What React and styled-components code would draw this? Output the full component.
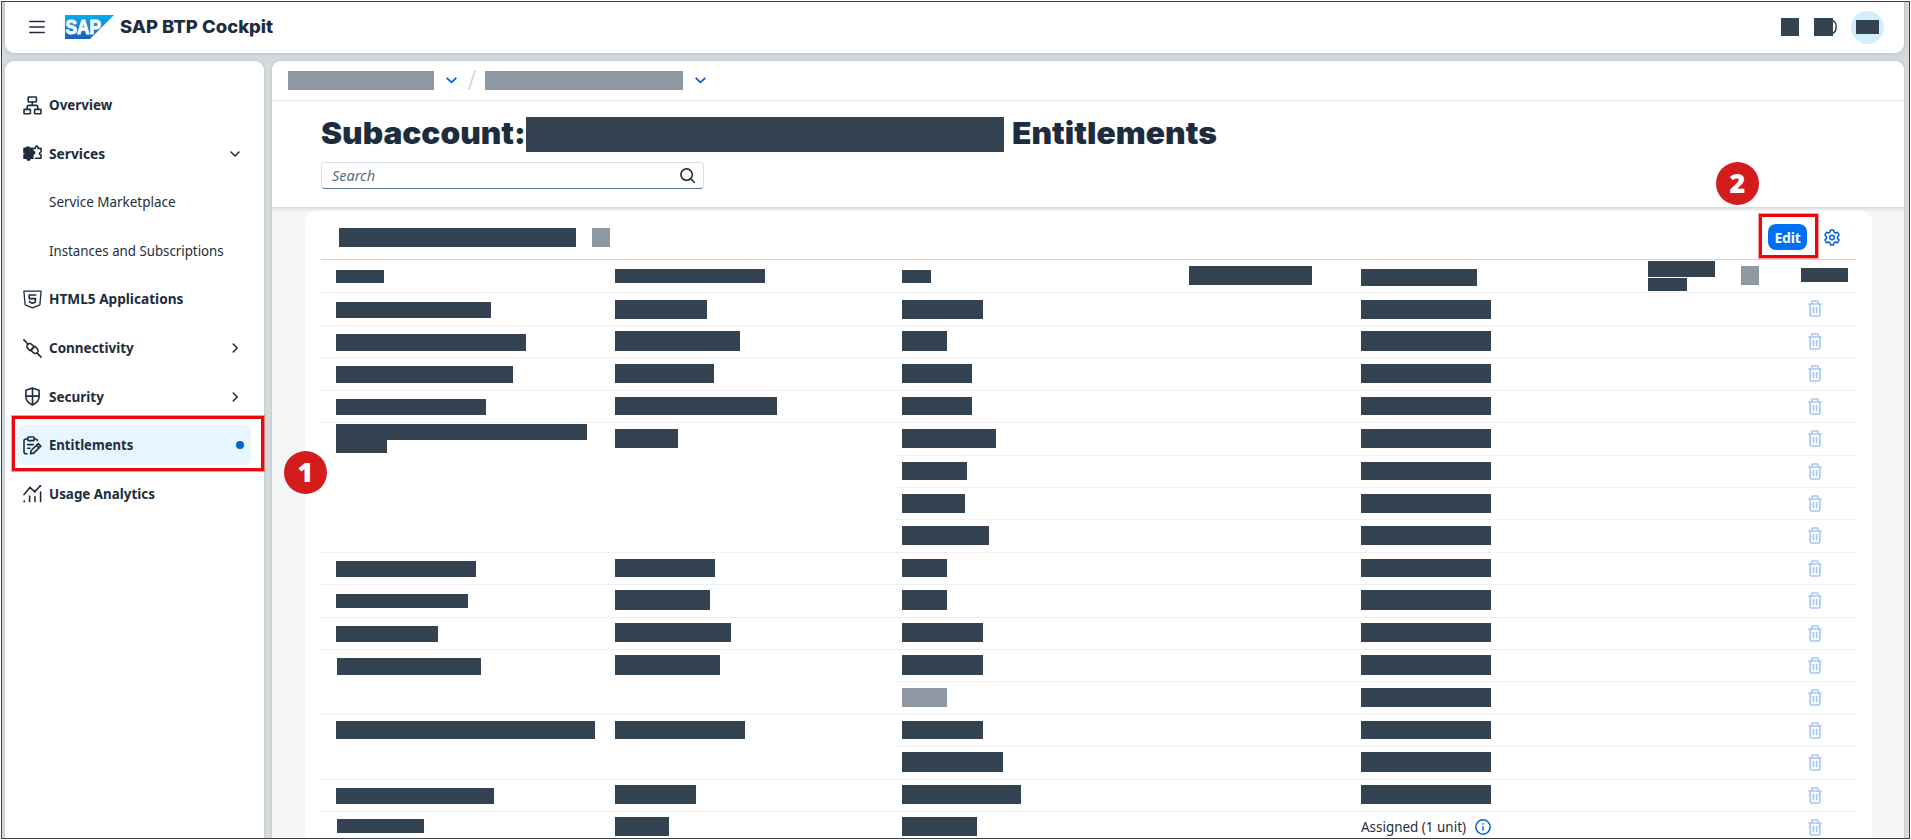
import React from "react";
import styled, { createGlobalStyle, css } from "styled-components";

const ink = "#1d2d3e";
const slate = "#344351";
const ash = "#8f99a3";

const GlobalStyle = createGlobalStyle`
  * { box-sizing: border-box; }
  html, body { margin: 0; padding: 0; background: #fff; }
  body { font-family: "Noto Sans", "Open Sans", sans-serif; color: ${ink}; overflow: hidden; }
`;

const Frame = styled.div`
  position: relative;
  width: 1909px;
  height: 838px;
  margin: 1px;
  border: 1px solid #3c3f42;
  background: #d5dadd;
  overflow: hidden;
  padding: 0 5px 0 3px;
  display: flex;
  flex-direction: column;
  gap: 8px;
`;

const Shell = styled.header`
  height: 51px;
  flex: none;
  background: #fff;
  border-radius: 0 0 9px 9px;
  box-shadow: 0 0 4px rgba(60, 75, 90, 0.25);
  display: flex;
  align-items: center;
  padding: 0 20px 1px 24px;
`;

const MenuIcon = styled.svg`
  width: 16px;
  height: 14px;
  margin-right: 20px;
`;

const Logo = styled.svg`
  width: 49px;
  height: 24px;
  margin-right: 6px;
`;

const Product = styled.div`
  font-family: Inter, "Noto Sans", sans-serif;
  font-size: 17.5px;
  font-weight: 800;
  white-space: nowrap;
  flex: 1;
  line-height: 24px;
  padding-bottom: 1px;
`;

const ShellTools = styled.div`
  display: flex;
  align-items: center;
  gap: 15px;
`;

const Avatar = styled.div`
  width: 33px;
  height: 33px;
  border-radius: 50%;
  background: #d1efff;
  display: flex;
  align-items: center;
  justify-content: center;
  margin-left: -1px;
`;

const HiddenAction = styled.div`
  display: flex;
  align-items: center;
  svg { width: 4px; height: 16px; }
`;

const Body = styled.div`
  flex: 1;
  min-height: 0;
  display: flex;
  gap: 8px;
`;

const Side = styled.nav`
  width: 259px;
  flex: none;
  background: #fff;
  border-radius: 9px 9px 0 0;
  box-shadow: 0 0 3px rgba(60, 75, 90, 0.2);
  padding: 24.3px 13px 0 12px;
`;

const NavItem = styled.div`
  height: 40px;
  margin-bottom: 8.55px;
  border-radius: 6px;
  padding: 0 7px 0 ${(p) => (p.$sub ? 32 : 6)}px;
  display: flex;
  align-items: center;
  font-size: 14px;
  line-height: 20px;
  font-weight: ${(p) => (p.$sub ? 400 : 700)};
  background: ${(p) => (p.$active ? "#e8f7ff" : "transparent")};
`;

const NavIcon = styled.svg`
  width: 19px;
  height: 19px;
  margin-right: 7px;
  flex: none;
  fill: none;
  stroke: ${ink};
  stroke-width: 1.6;
  stroke-linecap: round;
  stroke-linejoin: round;
`;

const NavLabel = styled.span`
  flex: 1;
  white-space: nowrap;
`;

const Label = styled.span`
  display: inline-block;
  transform-origin: 0 50%;
  transform: scaleX(${(p) => p.$fit});
`;

const NavArrow = styled.svg`
  width: 10px;
  height: 10px;
  margin-right: 4px;
  fill: none;
  stroke: ${ink};
  stroke-width: 1.5;
  stroke-linecap: round;
  stroke-linejoin: round;
`;

const Dot = styled.i`
  width: 8px;
  height: 8px;
  border-radius: 50%;
  background: #0064d9;
`;

const Main = styled.main`
  flex: 1;
  min-width: 0;
  background: #f5f6f8;
  border-radius: 9px 9px 0 0;
  box-shadow: 0 0 3px rgba(60, 75, 90, 0.2);
  overflow: hidden;
  display: flex;
  flex-direction: column;
`;

const Crumbs = styled.div`
  height: 40px;
  flex: none;
  background: #fff;
  border-bottom: 1px solid #f2f3f4;
  display: flex;
  align-items: center;
  padding: 0 16px 1px;
`;

const BlueArrow = styled.svg`
  width: 11px;
  height: 7px;
  margin: 0 11px 0 12px;
  fill: none;
  stroke: #0064d9;
  stroke-width: 1.8;
  stroke-linecap: round;
  stroke-linejoin: round;
`;

const Slash = styled.svg`
  width: 8px;
  height: 20px;
  margin-right: 9px;
  stroke: #d2d4d6;
  stroke-width: 1.6;
`;

const PageHead = styled.div`
  height: 107px;
  flex: none;
  background: #fff;
  border-bottom: 1px solid #d9dbdd;
  box-shadow: 0 1px 4px rgba(80, 90, 100, 0.18);
  padding: 16px 49px 0;
  position: relative;
  z-index: 1;
`;

const Title = styled.h1`
  margin: 0;
  height: 35px;
  display: flex;
  align-items: center;
  font-family: Inter, "Noto Sans", sans-serif;
  font-size: 30.5px;
  line-height: 32px;
  font-weight: 900;
  white-space: nowrap;
`;

const TitleText = styled.span`
  width: ${(p) => p.$w}px;
  padding-left: ${(p) => p.$pad || 0}px;
  padding-bottom: 4px;
  flex: none;
`;

const Search = styled.div`
  width: 383px;
  height: 27px;
  margin-top: 10px;
  border: 1px solid #d9dee3;
  border-bottom-color: #5b738b;
  border-radius: 4px;
  display: flex;
  align-items: center;
  justify-content: space-between;
  padding: 0 8px 1px 10px;
  font-size: 14px;
  font-style: italic;
  color: #556b82;
  svg { width: 15px; height: 15px; fill: none; stroke: ${ink}; stroke-width: 1.6; stroke-linecap: round; }
`;

const Panel = styled.section`
  flex: 1;
  min-height: 0;
  margin: 2px 32px 0 33px;
  background: #fff;
  border-radius: 12px 12px 0 0;
  padding: 0 16px;
  overflow: hidden;
`;

const Toolbar = styled.div`
  height: 50px;
  border-bottom: 1px solid #cfd5d9;
  display: flex;
  align-items: center;
  padding: 5px 16px 0 18px;
`;

const EditButton = styled.button`
  width: 39px;
  height: 26px;
  margin: 0 17px 0 auto;
  border: 0;
  border-radius: 8px;
  background: #0070f2;
  color: #fff;
  font: 700 14px/25px "Noto Sans", sans-serif;
  padding: 0;
  text-align: center;
  letter-spacing: -0.2px;
`;

const Gear = styled.svg`
  width: 16px;
  height: 17px;
  fill: none;
  stroke: #0064d9;
  stroke-width: 1.5;
  stroke-linejoin: round;
`;

const columns = "294px 281px 287px 172px 287px 93px 60px 61px";

const HeaderRow = styled.div`
  display: grid;
  grid-template-columns: ${columns};
  height: 32.4px;
  overflow: hidden;
`;

const Row = styled.div`
  display: grid;
  grid-template-columns: 294px 280px 1fr;
  height: 32.43px;
`;

const line = css`border-top: 1px solid #eef0f1;`;

const Cell = styled.div`
  padding-left: ${(p) => p.$pad ?? 0}px;
  ${(p) => p.$line && line}
`;

const Details = styled.div`
  ${line}
  display: grid;
  grid-template-columns: 466px 447px 48px;
`;

const Bar = styled.div`
  width: ${(p) => p.$w}px;
  height: ${(p) => p.$h}px;
  margin-top: ${(p) => p.$t || 0}px;
  margin-left: ${(p) => p.$x || 0}px;
  background: ${(p) => (p.$soft ? ash : slate)};
  flex: none;
`;

const Assigned = styled.div`
  display: flex;
  align-items: center;
  height: 29px;
  font-size: 14px;
  white-space: nowrap;
  span { width: 113.5px; }
  svg { width: 16px; height: 16px; fill: none; stroke: #0064d9; stroke-width: 1.5; }
`;

const Bin = styled.svg`
  display: block;
  width: 14px;
  height: 17px;
  margin-top: 7px;
  fill: none;
  stroke: #a8c6f3;
  stroke-width: 1.7;
  stroke-linecap: round;
  stroke-linejoin: round;
`;

const Highlight = styled.div`
  position: absolute;
  left: ${(p) => p.$x}px;
  top: ${(p) => p.$y}px;
  width: ${(p) => p.$w}px;
  height: ${(p) => p.$h}px;
  border: 3.5px solid #ea0a0d;
  outline: 0.5px solid rgba(234, 10, 13, 0.4);
  z-index: 3;
`;

const Step = styled.div`
  position: absolute;
  left: ${(p) => p.$x}px;
  top: ${(p) => p.$y}px;
  width: 43px;
  height: 43px;
  border-radius: 50%;
  background: #d41c1c;
  color: #fff;
  font: 800 27px/42px "Open Sans", "Noto Sans", sans-serif;
  text-align: center;
  z-index: 3;
`;

const icons = {
  overview: (
    <>
      <rect x="5.2" y="1" width="8.2" height="5" rx="0.6" />
      <rect x="1" y="13.4" width="6.4" height="4.4" rx="0.6" />
      <rect x="11.6" y="13.4" width="6.4" height="4.4" rx="0.6" />
      <path d="M9.3 6v3.4M4.2 13.4V11q0-1.6 1.6-1.6h7.4q1.6 0 1.6 1.6v2.4" />
    </>
  ),
  services: (
    <>
      <path fill={ink} d="M1 4.4h2.6c-.6-1.9 3-1.9 2.6 0h3.6v3c2.3-.6 2.3 3.2 0 2.6v4.2H7c.5 2.6-3.2 2.6-2.8 0H1v-3.4c1.7.3 1.7-2.6 0-2.3z" />
      <path d="M11 4.4h1.3c-.3-3 3-3 2.7 0h3V8c-2 .2-2 2.6 0 2.8v3.4h-5.600" />
    </>
  ),
  html5: (
    <>
      <path strokeWidth="1.3" d="M.9 1.2h17.2l-1.2 13.6-7.4 3-7.4-3z" />
      <path d="M12.8 5H6.2v3.6h6.3l-.3 3.6-2.7 1-2.7-1-.2-1" />
    </>
  ),
  connectivity: (
    <>
      <path d="M.9.9l4.3 4.3M13.9 13.9l4.2 4.2" />
      <path d="M10.9 7.6C9 5.2 6.4 3.4 4.6 5.2s-.2 4.400 2.500 6.500zM8.100 11.400c1.900 2.400 4.500 4.200 6.300 2.400s.2-4.400-2.500-6.500z" />
    </>
  ),
  security: (
    <path d="M9.5 1l6.6 2.3v6.2c0 4-2.6 6.7-6.6 8.500-4-1.800-6.600-4.500-6.600-8.500V3.300zM9.500 1v17M2.900 9.100h13.200" />
  ),
  entitlements: (
    <>
      <path d="M4.700 3H3Q1 3 1 5v10.800q0 2 2 2h1M11.300 3h1.200q1.600 0 1.900 1.500" />
      <rect x="4.7" y="1" width="6.6" height="3.6" rx="1.2" />
      <path d="M4.600 8.600h5.600M4.600 12.200h2.300M7.500 17.800l.6-3.300 7.200-6.900 2.500 2.500-7.100 7zM13.600 9.400l2.400 2.400" />
    </>
  ),
  usage: (
    <>
      <path d="M1 10.600l6-7 4.800 4 5.600-5.800M1.200 17v.8M6.600 12v5.600M12 12.800v4.800M17.600 8v9.600" />
      <path strokeWidth="2.2" d="M7 3.600v.1M17.200 2v.1M11.800 7.600v.1" />
    </>
  ),
};

const nav = [
  { label: "Overview", icon: "overview", fit: 0.96 },
  { label: "Services", icon: "services", arrow: "down", fit: 0.985 },
  { label: "Service Marketplace", sub: true, fit: 0.96 },
  { label: "Instances and Subscriptions", sub: true, fit: 0.948 },
  { label: "HTML5 Applications", icon: "html5", fit: 0.974 },
  { label: "Connectivity", icon: "connectivity", arrow: "right", fit: 0.963 },
  { label: "Security", icon: "security", arrow: "right", fit: 0.965 },
  { label: "Entitlements", icon: "entitlements", active: true, fit: 0.937 },
  { label: "Usage Analytics", icon: "usage", fit: 0.957 },
];

// a: blocks of the first column [width, height, top, x]; b, c: widths of the second and third; t, h: top and height
const rows = [
  { a: [[154.5, 16, 9]], b: 91.5, c: 81, t: 7, h: 18.5 },
  { a: [[189.5, 17, 8.2]], b: 125, c: 45, t: 5.6, h: 19.5 },
  { a: [[177, 17, 8.2]], b: 99.4, c: 70, t: 6, h: 19 },
  { a: [[150, 16, 8.5]], b: 162, c: 70, t: 6, h: 18.5 },
  { a: [[251, 15.5, 1], [51, 13, 0.5]], b: 63, c: 94.4, t: 6, h: 18.5 },
  { c: 65.4, t: 6.3, h: 18.5 },
  { c: 63, t: 5.8, h: 19 },
  { c: 87, t: 5.5, h: 19.5 },
  { a: [[140, 16, 8.3]], b: 100.4, c: 45, t: 6, h: 18.5 },
  { a: [[132, 14, 8.8]], b: 95, c: 45, t: 5.3, h: 19.5 },
  { a: [[102.4, 16, 8.5]], b: 116, c: 81, t: 5.3, h: 19 },
  { a: [[144, 17, 7.7, 1]], b: 105, c: 81, t: 5.0, h: 19.5 },
  { soft: true, c: 45, t: 5.7, h: 19 },
  { a: [[259, 18.5, 5.8]], b: 129.5, c: 81, t: 5.8, h: 18.5 },
  { c: 101, t: 5, h: 19.5 },
  { a: [[158, 16, 8.3]], b: 81.4, c: 119.4, t: 5.3, h: 19 },
  { a: [[87, 14, 7.3, 1]], b: 54, c: 75.4, t: 5, h: 18.5, last: true },
];

function Arrow({ dir }) {
  return (
    <NavArrow viewBox="0 0 10 10">
      <path d={dir === "down" ? "M1 3l4 4 4-4" : "M3.2 1l4 4-4 4"} />
    </NavArrow>
  );
}

function Chevron() {
  return (
    <BlueArrow viewBox="0 0 11 7">
      <path d="M1.2 1.3l4.3 4 4.3-4" />
    </BlueArrow>
  );
}

function TrashIcon() {
  return (
    <Bin viewBox="0 0 14 17">
      <path d="M1 4h12M4 3.800V1.800q0-.8.8-.8h4.400q.8 0 .8.8v2M2.200 4v10.800q0 1.200 1.200 1.200h7.200q1.200 0 1.200-1.200V4M5.400 7.600v5M8.600 7.600v5" />
    </Bin>
  );
}

function EntitlementRow({ r }) {
  return (
    <Row>
      <Cell $line={r.a} $pad={15}>
        {r.a?.map(([w, h, t, x], i) => <Bar key={i} $w={w} $h={h} $t={t} $x={x} />)}
      </Cell>
      <Cell $line={r.b}>{r.b && <Bar $w={r.b} $h={r.h} $t={r.t} />}</Cell>
      <Details>
        <Cell $pad={7}><Bar $w={r.c} $h={r.h} $t={r.t} $soft={r.soft} /></Cell>
        <Cell>
          {r.last ? (
            <Assigned>
              <span><Label $fit={0.96}>Assigned (1 unit)</Label></span>
              <svg viewBox="0 0 16 16"><circle cx="8" cy="8" r="7.2" /><path d="M8 7.2v4.3M8 4.3v1.3" /></svg>
            </Assigned>
          ) : <Bar $w={130.4} $h={r.h} $t={r.t} />}
        </Cell>
        <Cell><TrashIcon /></Cell>
      </Details>
    </Row>
  );
}

export default function App() {
  return (
    <>
      <GlobalStyle />
      <Frame>
        <Shell>
          <MenuIcon viewBox="0 0 16 14" stroke={ink} strokeWidth="1.5" strokeLinecap="round">
            <path d="M.8 1.5h14.4M.8 7h14.4M.8 12.5h14.4" />
          </MenuIcon>
          <Logo viewBox="0 0 49 24">
            <defs>
              <linearGradient id="sap" x1="0" y1="0" x2="0" y2="1">
                <stop offset="0" stopColor="#00aeef" />
                <stop offset="1" stopColor="#1d5fbf" />
              </linearGradient>
            </defs>
            <path d="M0 0h49L25 24H0z" fill="url(#sap)" />
            <text x="0.5" y="19" fontFamily="Liberation Sans, sans-serif" fontWeight="700" fontSize="19.5" fill="#fff" stroke="#fff" strokeWidth="1" textLength="35.5" lengthAdjust="spacingAndGlyphs">SAP</text>
          </Logo>
          <Product><Label $fit={1.056}>SAP BTP Cockpit</Label></Product>
          <ShellTools>
            <Bar $w={18.5} $h={18} />
            <HiddenAction>
              <Bar $w={19} $h={18} />
              <svg viewBox="0 0 4 16" fill="none" stroke={ink} strokeWidth="1.3"><path d="M0 1.5q3.2 2 3.2 6.5T0 14.5" /></svg>
            </HiddenAction>
            <Avatar><Bar $w={23} $h={14} /></Avatar>
          </ShellTools>
        </Shell>
        <Body>
          <Side>
            {nav.map((n) => (
              <NavItem key={n.label} $sub={n.sub} $active={n.active}>
                {n.icon && <NavIcon viewBox="0 0 19 19">{icons[n.icon]}</NavIcon>}
                <NavLabel><Label $fit={n.fit}>{n.label}</Label></NavLabel>
                {n.arrow && <Arrow dir={n.arrow} />}
                {n.active && <Dot />}
              </NavItem>
            ))}
          </Side>
          <Main>
            <Crumbs>
              <Bar $w={146} $h={19} $soft />
              <Chevron />
              <Slash viewBox="0 0 8 20"><path d="M7 .5L1 19.5" /></Slash>
              <Bar $w={198} $h={19} $soft />
              <Chevron />
            </Crumbs>
            <PageHead>
              <Title>
                <TitleText $w={205}><Label $fit={1.038}>Subaccount:</Label></TitleText>
                <Bar $w={478} $h={35} />
                <TitleText $w={220} $pad={8}><Label $fit={1.042}>Entitlements</Label></TitleText>
              </Title>
              <Search>
                <Label $fit={1.03}>Search</Label>
                <svg viewBox="0 0 15 15"><circle cx="6.6" cy="6.6" r="5.7" /><path d="M10.8 10.8l3.4 3.4" /></svg>
              </Search>
            </PageHead>
            <Panel>
              <Toolbar>
                <Bar $w={237} $h={19} />
                <Bar $w={18} $h={19} $x={16} $soft />
                <EditButton>Edit</EditButton>
                <Gear viewBox="0 0 16 17">
                  <path d="M6.5 1h3l.6 2.2 1.3.8 2.2-.7 1.5 2.7-1.6 1.6v1.8l1.6 1.6-1.5 2.7-2.2-.7-1.3.8L9.500 16h-3l-.6-2.200-1.300-.8-2.200.7L.9 11l1.600-1.600V7.600L.9 6l1.500-2.700 2.200.7 1.300-.8z" />
                  <circle cx="8" cy="8.5" r="2.3" />
                </Gear>
              </Toolbar>
              <HeaderRow>
                <Cell $pad={15}><Bar $w={48} $h={13} $t={9.5} /></Cell>
                <Cell><Bar $w={150} $h={14} $t={8.5} /></Cell>
                <Cell $pad={6}><Bar $w={29} $h={12.5} $t={10} /></Cell>
                <Cell $pad={6}><Bar $w={123} $h={18.5} $t={6} /></Cell>
                <Cell $pad={6}><Bar $w={116} $h={17} $t={8.5} /></Cell>
                <Cell $pad={6}><Bar $w={67.4} $h={15.5} $t={1} /><Bar $w={39} $h={13} $t={1} /></Cell>
                <Cell $pad={6}><Bar $w={18} $h={18.5} $t={6} $soft /></Cell>
                <Cell $pad={6}><Bar $w={47} $h={14} $t={8} /></Cell>
              </HeaderRow>
              {rows.map((r, i) => <EntitlementRow key={i} r={r} />)}
            </Panel>
          </Main>
        </Body>
        <Highlight $x={10} $y={414} $w={252} $h={55} />
        <Highlight $x={1757} $y={211.5} $w={59} $h={44} />
        <Step $x={282} $y={449}>1</Step>
        <Step $x={1714} $y={160}>2</Step>
      </Frame>
    </>
  );
}
